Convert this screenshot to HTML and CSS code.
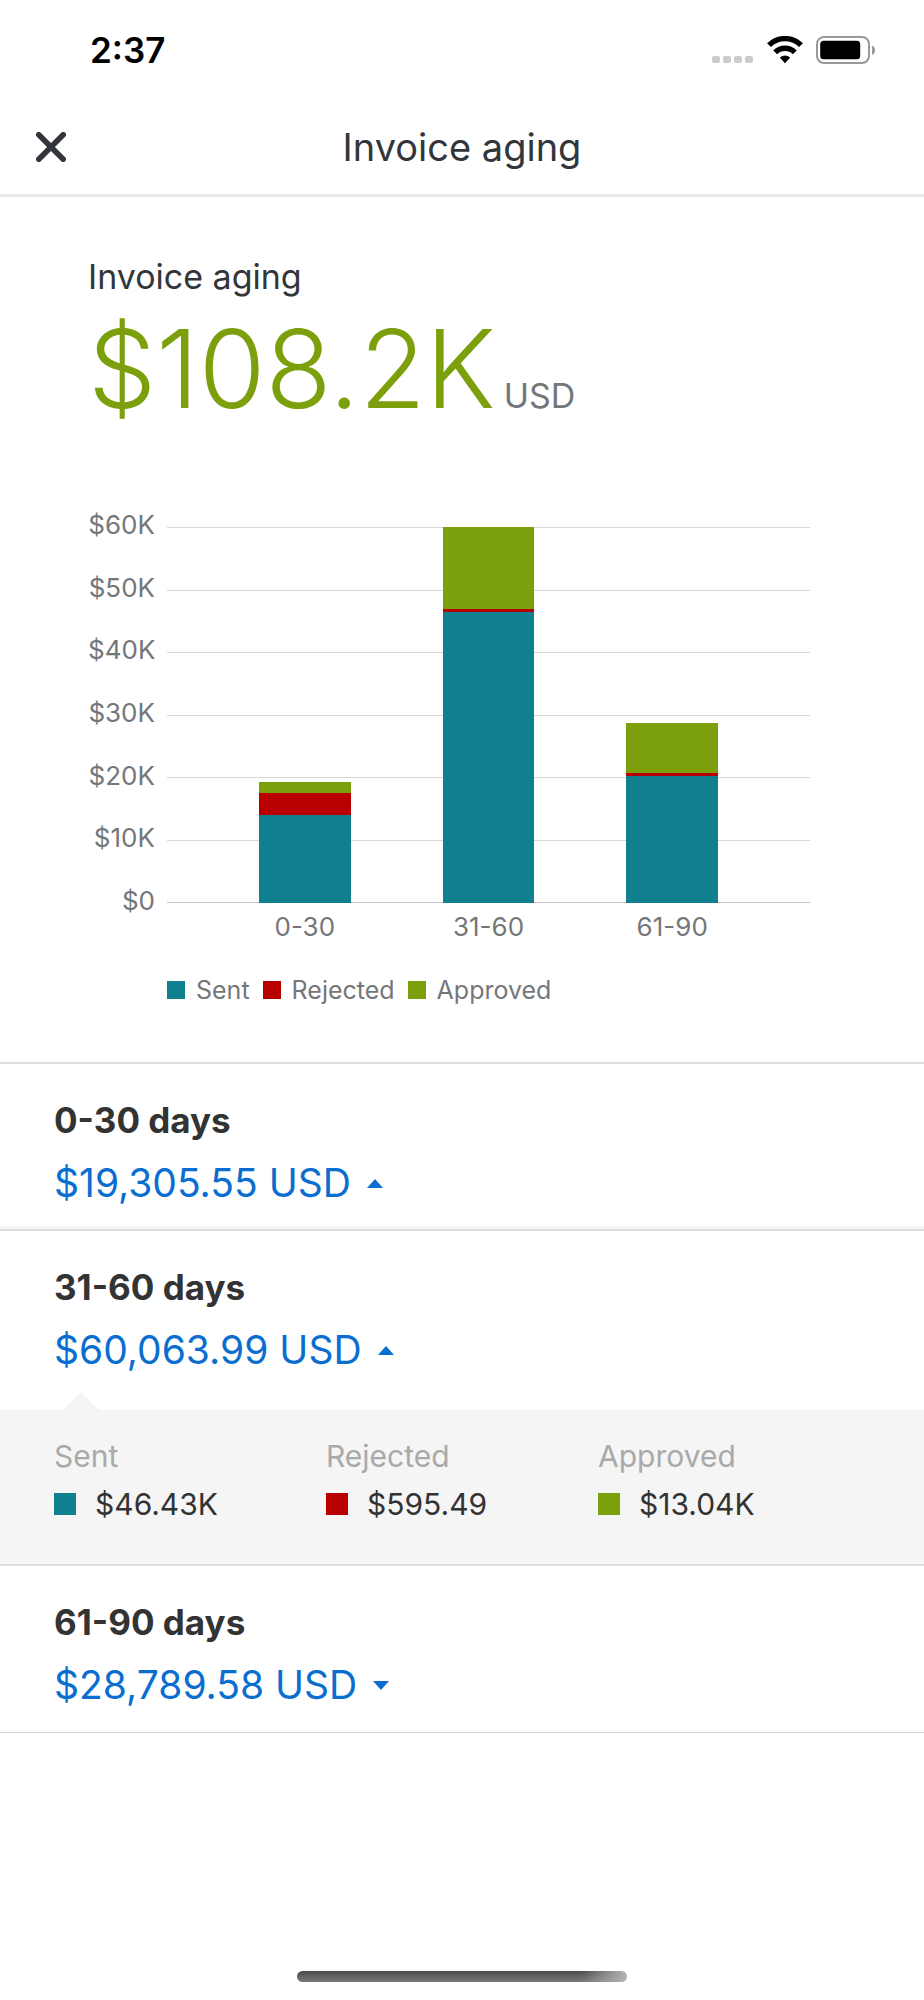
FILE: index.html
```html
<!DOCTYPE html>
<html lang="en">
<head>
<meta charset="utf-8">
<meta name="viewport" content="width=device-width, initial-scale=1">
<title>Invoice aging</title>
<link rel="stylesheet" href="styles.css">
</head>
<body>
<div class="screen">
  <div class="status">
    <span class="status-time">2:37</span>
    <div class="status-icons">
      <svg class="cell" width="42" height="28" viewBox="0 0 42 28" aria-hidden="true">
        <rect x="0" y="20" width="8" height="7" rx="2"/><rect x="11" y="20" width="8" height="7" rx="2"/><rect x="22" y="20" width="8" height="7" rx="2"/><rect x="33" y="20" width="8" height="7" rx="2"/>
      </svg>
      <svg class="wifi" width="36" height="28" viewBox="0 0 36 28" aria-hidden="true">
        <path d="M2 9.2A22.6 22.6 0 0 1 34 9.2" fill="none" stroke="#000" stroke-width="5.4"/>
        <path d="M8.2 16.4A13.8 13.8 0 0 1 27.8 16.4" fill="none" stroke="#000" stroke-width="5.4"/>
        <path d="M18 27.2L12.8 21.6Q18 17.6 23.2 21.6Z"/>
      </svg>
      <svg class="battery" width="60" height="28" viewBox="0 0 60 28" aria-hidden="true">
        <rect x="1" y="1" width="52" height="26" rx="7" fill="none" stroke="#999" stroke-width="2"/>
        <rect x="4.2" y="4.7" width="40" height="18.6" rx="3.5"/>
        <path d="M56 9.6Q59 10.6 59 14.3Q59 18 56 19Z" fill="#999"/>
      </svg>
    </div>
  </div>

  <header class="topbar">
    <button class="close" type="button" aria-label="Close">
      <svg width="30" height="30" viewBox="0 0 30 30" aria-hidden="true"><path d="M2.8 2.8L27.2 27.2M27.2 2.8L2.8 27.2" fill="none" stroke="#32363a" stroke-width="5.6" stroke-linecap="round"/></svg>
    </button>
    <h1 class="title">Invoice aging</h1>
  </header>

  <main class="content">
    <section class="summary">
      <h2 class="summary-label">Invoice aging</h2>
      <p class="total"><span class="total-value">$108.2K</span><span class="total-unit">USD</span></p>

      <div class="chart">
        <div class="y-axis">
          <span>$60K</span><span>$50K</span><span>$40K</span><span>$30K</span><span>$20K</span><span>$10K</span><span>$0</span>
        </div>
        <div class="plot">
          <div class="gridlines"><i></i><i></i><i></i><i></i><i></i><i></i><i></i></div>
          <div class="bars">
            <div class="bar">
              <div class="approved" style="height:2.9%"></div><div class="rejected" style="height:5.8%"></div><div class="sent" style="height:23.5%"></div>
            </div>
            <div class="bar">
              <div class="approved" style="height:21.7%"></div><div class="rejected" style="height:1%"></div><div class="sent" style="height:77.4%"></div>
            </div>
            <div class="bar">
              <div class="approved" style="height:13.3%"></div><div class="rejected" style="height:1%"></div><div class="sent" style="height:33.7%"></div>
            </div>
          </div>
        </div>
        <div class="x-axis"><span>0-30</span><span>31-60</span><span>61-90</span></div>
        <ul class="legend">
          <li><i class="key sent"></i>Sent</li>
          <li><i class="key rejected"></i>Rejected</li>
          <li><i class="key approved"></i>Approved</li>
        </ul>
      </div>
    </section>

    <section class="range folded">
      <h3 class="range-title">0-30 days</h3>
      <button class="amount" type="button" aria-expanded="true">$19,305.55 USD<svg width="16" height="9" viewBox="0 0 16 9" aria-hidden="true"><path d="M0 9L8 0L16 9Z"/></svg></button>
    </section>

    <section class="range open">
      <h3 class="range-title">31-60 days</h3>
      <button class="amount" type="button" aria-expanded="true">$60,063.99 USD<svg width="16" height="9" viewBox="0 0 16 9" aria-hidden="true"><path d="M0 9L8 0L16 9Z"/></svg></button>
      <svg class="pointer" width="36" height="18" viewBox="0 0 36 18" aria-hidden="true"><path d="M0 18L18 0L36 18Z"/></svg>
    </section>
    <dl class="breakdown">
      <div><dt>Sent</dt><dd><i class="swatch sent"></i>$46.43K</dd></div>
      <div><dt>Rejected</dt><dd><i class="swatch rejected"></i>$595.49</dd></div>
      <div><dt>Approved</dt><dd><i class="swatch approved"></i>$13.04K</dd></div>
    </dl>

    <section class="range">
      <h3 class="range-title">61-90 days</h3>
      <button class="amount" type="button" aria-expanded="false">$28,789.58 USD<svg width="16" height="9" viewBox="0 0 16 9" aria-hidden="true"><path d="M0 0L8 9L16 0Z"/></svg></button>
    </section>
  </main>

  <div class="home"></div>
</div>
</body>
</html>
```
FILE: styles.css
```css
* { box-sizing: border-box; }

body {
  margin: 0;
  background: #fff;
  color: #32363a;
  font-family: Inter, "Liberation Sans", sans-serif;
}

h1, h2, h3, p, dl, dd, ul { margin: 0; padding: 0; }
ul { list-style: none; }

button {
  padding: 0;
  border: 0;
  background: none;
  font: inherit;
  cursor: pointer;
}

.screen {
  display: flex;
  flex-direction: column;
  min-height: 100vh;
}

.status {
  display: flex;
  justify-content: space-between;
  align-items: center;
  height: 100px;
  padding: 0 48px 0 90px;
  color: #000;
}
.status-time { font-size: 35px; font-weight: 600; line-height: 40px; }
.status-icons { display: flex; gap: 13px; }
.cell { fill: #ccc; }

.topbar {
  display: grid;
  grid-template-columns: 36px 1fr 36px;
  align-items: center;
  height: 97px;
  padding: 0 33px;
  border-bottom: 3px solid #e8e8e8;
}
.close { display: flex; justify-content: center; }
.title {
  font-size: 38px;
  font-weight: 400;
  line-height: 48px;
  text-align: center;
}

.content { flex: 1; }

.summary { padding: 58px 114px 56px 88px; }
.summary-label { font-size: 34px; font-weight: 400; line-height: 44px; }
.total { display: flex; align-items: baseline; gap: 8px; line-height: 140px; }
.total-value { color: #7ca00c; font-size: 108px; font-weight: 300; }
.total-unit { color: #74777a; font-size: 34px; }

.chart {
  display: grid;
  grid-template-columns: 67px 1fr;
  column-gap: 12px;
  margin-top: 61px;
  color: #74777a;
  font-size: 26px;
  line-height: 32px;
}
.y-axis {
  display: flex;
  flex-direction: column;
  justify-content: space-between;
  margin: -18px 0 -14px;
  text-align: right;
}
.plot { display: grid; height: 376px; }
.gridlines, .bars { grid-area: 1 / 1; }
.gridlines { display: flex; flex-direction: column; justify-content: space-between; }
.gridlines i { height: 1px; background: #d8d8d8; }
.gridlines i:last-child { background: #c4c4c4; }
.bars, .x-axis { display: grid; grid-template-columns: repeat(7, 1fr); }
.bar { display: flex; flex-direction: column; justify-content: flex-end; }
.bar:nth-child(1) { grid-column: 2; }
.bar:nth-child(2) { grid-column: 4; }
.bar:nth-child(3) { grid-column: 6; }

.sent { background: #10808f; }
.rejected { background: #b80000; }
.approved { background: #7ca00c; }

.x-axis { grid-column: 2; margin-top: 8px; text-align: center; white-space: nowrap; }
.x-axis span:nth-child(1) { grid-column: 2; }
.x-axis span:nth-child(2) { grid-column: 4; }
.x-axis span:nth-child(3) { grid-column: 6; }

.legend {
  grid-column: 2;
  display: flex;
  gap: 13px;
  margin-top: 31px;
  font-size: 25px;
}
.legend li { display: flex; align-items: center; gap: 11px; }
.key { width: 18px; height: 18px; }

.range {
  padding: 32px 54px 22px;
  border-top: 2px solid #dedede;
}
.range:last-child { border-bottom: 1px solid #d4d4d4; }
.range-title { color: #333; font-size: 35px; font-weight: 700; line-height: 48px; }
.amount {
  display: flex;
  align-items: center;
  gap: 16px;
  margin-top: 14px;
  color: #0a6ed1;
  font-size: 39px;
  line-height: 50px;
}
.amount svg { fill: currentColor; }
.folded { border-bottom: 3px solid #f5f5f5; padding-bottom: 18px; }
.open { padding-bottom: 18px; }
.pointer { display: block; margin: 17px 0 -18px 9px; fill: #f5f5f5; }

.breakdown {
  display: grid;
  grid-template-columns: repeat(3, 1fr);
  padding: 22px 54px 36px;
  background: #f5f5f5;
  font-size: 30px;
  line-height: 48px;
}
.breakdown dt { color: #a9a9a9; }
.breakdown dd { display: flex; align-items: center; gap: 19px; color: #333; }
.swatch { width: 22px; height: 22px; }

.home {
  align-self: center;
  width: 330px;
  height: 11px;
  margin-bottom: 18px;
  border-radius: 6px;
  background: linear-gradient(90deg, transparent 86%, #b4b4b4), linear-gradient(#4c4c4c, #7a7a7a);
}
```
